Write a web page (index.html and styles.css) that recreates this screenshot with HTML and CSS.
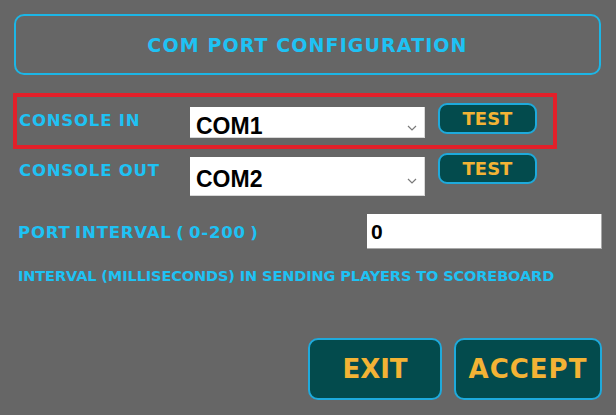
FILE: index.html
```html
<!DOCTYPE html>
<html>
<head>
<meta charset="utf-8">
<link rel="stylesheet" href="styles.css">
</head>
<body>
<div class="screen">
  <div class="title-box"><span class="title">COM PORT CONFIGURATION</span></div>

  <div class="row row-in highlight">
    <div class="label label-in">CONSOLE IN</div>
    <div class="combo combo-in"><span class="combo-value">COM1</span><svg class="chev" width="10" height="6" viewBox="0 0 10 6"><path d="M1 1 L5 5 L9 1" fill="none" stroke="#7a7a7a" stroke-width="1.2"/></svg></div>
    <button class="btn-test test-in">TEST</button>
  </div>

  <div class="row row-out">
    <div class="label label-out">CONSOLE OUT</div>
    <div class="combo combo-out"><span class="combo-value">COM2</span><svg class="chev" width="10" height="6" viewBox="0 0 10 6"><path d="M1 1 L5 5 L9 1" fill="none" stroke="#7a7a7a" stroke-width="1.2"/></svg></div>
    <button class="btn-test test-out">TEST</button>
  </div>

  <div class="interval-row">
    <div class="label label-interval">PORT INTERVAL ( 0-200 )</div>
    <div class="num-input">0</div>
  </div>

  <div class="hint">INTERVAL (MILLISECONDS) IN SENDING PLAYERS TO SCOREBOARD</div>

  <div class="actions">
    <button class="btn-big btn-exit">EXIT</button>
    <button class="btn-big btn-accept">ACCEPT</button>
  </div>
</div>
</body>
</html>
```

FILE: styles.css
```css
html, body {
  margin: 0;
  padding: 0;
  background: #666666;
}

body {
  font-family: "DejaVu Sans", sans-serif;
}

.screen {
  width: 616px;
  height: 415px;
  box-sizing: border-box;
  padding: 14px 14px 15px 14px;
  display: flex;
  flex-direction: column;
}

.title-box {
  height: 61px;
  box-sizing: border-box;
  margin-right: 1px;
  border: 2px solid #1cb6e6;
  border-radius: 10px;
  display: flex;
  align-items: center;
  justify-content: center;
}

.title {
  color: #1ec2f4;
  font-size: 19px;
  font-weight: bold;
  letter-spacing: 1.1px;
  line-height: 20px;
}

.label {
  color: #1ec2f4;
  font-size: 16.5px;
  font-weight: bold;
  line-height: 20px;
  letter-spacing: 0.8px;
  white-space: nowrap;
}

.row {
  display: flex;
  align-items: flex-start;
  box-sizing: border-box;
  width: 544px;
  margin-left: -1px;
  padding-left: 2px;
  border: 4px solid transparent;
}

.row-in {
  height: 56px;
  margin-top: 18px;
}

.highlight {
  border-color: #e3202a;
}

.row-out {
  height: 52px;
}

.row .label {
  width: 171px;
}

.label-in {
  margin-top: 14px;
}

.label-out {
  margin-top: 8px;
}

.combo {
  width: 235px;
  box-sizing: border-box;
  background: #ffffff;
  border-right: 1px solid #d8d8d8;
  border-bottom: 1px solid #d8d8d8;
  display: flex;
  align-items: center;
  justify-content: space-between;
  padding: 0 7px 0 6px;
}

.combo-in {
  height: 31px;
  margin-top: 10px;
  padding-top: 7px;
}

.combo-out {
  height: 39px;
  margin-top: 4px;
  padding-top: 5px;
}

.combo-value {
  font-family: "Liberation Sans", Arial, sans-serif;
  font-weight: bold;
  font-size: 23px;
  color: #000000;
  line-height: 24px;
}

.chev {
  display: block;
  margin-top: 4px;
}

.btn-test {
  width: 99px;
  height: 31px;
  margin-left: 13px;
  box-sizing: border-box;
  padding: 0;
  background: #034b4d;
  border: 2px solid #1eaadc;
  border-radius: 9px;
  color: #f3b335;
  font-family: "DejaVu Sans", sans-serif;
  font-weight: bold;
  font-size: 18px;
  line-height: 20px;
}

.test-in {
  margin-top: 6px;
}

.test-out {
  margin-top: 0;
}

.interval-row {
  display: flex;
  align-items: flex-start;
  justify-content: space-between;
  margin-top: 13px;
  padding-left: 4px;
}

.label-interval {
  margin-top: 9px;
  word-spacing: -2px;
}

.num-input {
  width: 235px;
  height: 35px;
  box-sizing: border-box;
  background: #ffffff;
  border-right: 1px solid #a9a9a9;
  border-bottom: 1px solid #a9a9a9;
  padding: 6px 0 0 4px;
  font-family: "Liberation Sans", Arial, sans-serif;
  font-weight: bold;
  font-size: 21px;
  line-height: 24px;
  color: #000000;
}

.hint {
  margin-top: 19px;
  padding-left: 4px;
  color: #1ec2f4;
  font-size: 14.5px;
  font-weight: bold;
  line-height: 16px;
  letter-spacing: -0.1px;
  white-space: nowrap;
}

.actions {
  margin-top: auto;
  display: flex;
  justify-content: flex-end;
  gap: 12px;
}

.btn-big {
  height: 62px;
  box-sizing: border-box;
  padding: 0;
  background: #034b4d;
  border: 2px solid #1eaadc;
  border-radius: 10px;
  color: #f3b335;
  font-family: "DejaVu Sans", sans-serif;
  font-weight: bold;
  font-size: 26px;
  line-height: 30px;
}

.btn-exit {
  width: 134px;
}

.btn-accept {
  width: 148px;
  letter-spacing: 1px;
}
```
